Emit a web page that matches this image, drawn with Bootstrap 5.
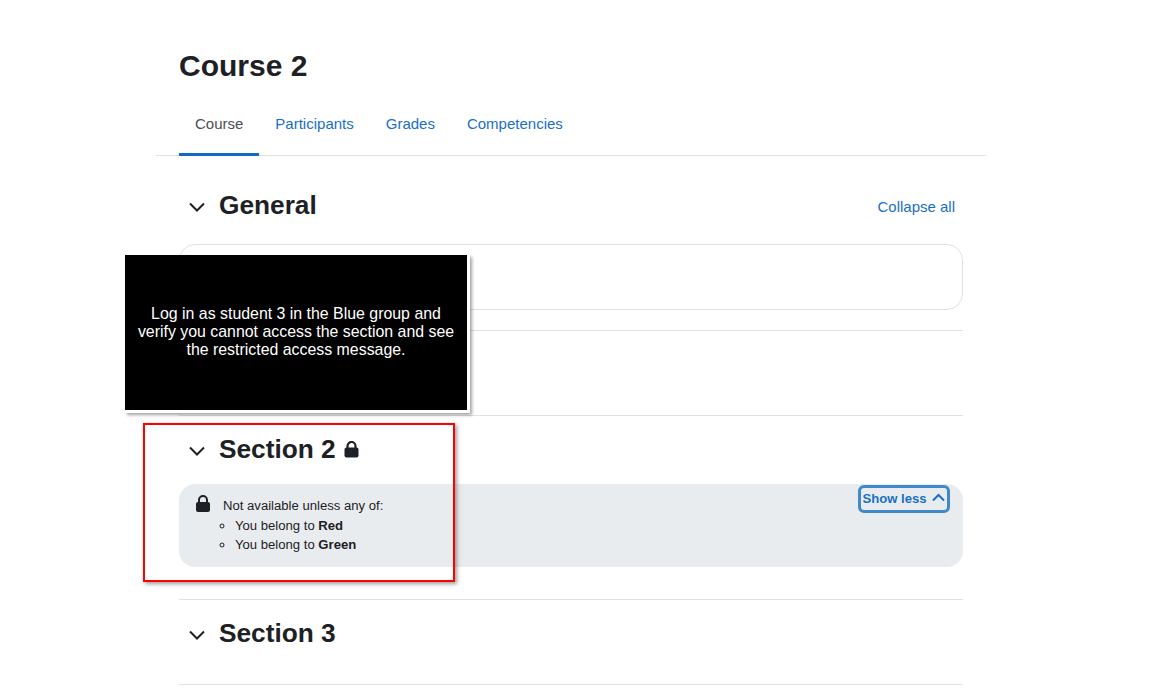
<!DOCTYPE html>
<html lang="en">
<head>
<meta charset="utf-8">
<title>Course 2</title>
<link href="https://cdn.jsdelivr.net/npm/bootstrap@5.3.0/dist/css/bootstrap.min.css" rel="stylesheet">
<style>
html,body{height:699px;overflow:hidden;background:#fff;}
body{font-family:"Liberation Sans",Arial,sans-serif;color:#1d2125;font-size:15px;position:relative;}
.page-wrap{width:830px;margin-left:156px;}
.page-head{padding:0 23px;height:100px;display:flex;align-items:flex-end;}
.page-head h1{font-size:30px;font-weight:700;line-height:36px;margin:0 0 16px;color:#1d2125;}
.tab-row{border-bottom:1px solid #dee2e6;padding:0 23px;height:56px;display:flex;}
.tab-row a{display:block;height:56px;padding:0 16px;line-height:48px;font-size:15px;color:#1a6fc4;text-decoration:none;}
.tab-row a.on{color:#495057;border-bottom:3px solid #0f6cbf;}
.main-col{padding:0 23px;}
.sec-head{display:flex;align-items:center;}
.sec-head h3{font-size:26.25px;font-weight:700;line-height:32px;margin:0;color:#1d2125;}
.chev{width:40px;height:16px;flex:none;margin-top:3px;}
.sec-one{height:175px;padding-top:33px;border-bottom:1px solid #dee2e6;}
.sec-one .sec-head{justify-content:space-between;padding-right:8px;}
.collapse-link{font-size:15px;color:#1a6fc4;text-decoration:none;padding-top:4px;}
.info-box{border:1px solid #dee2e6;border-radius:16px;height:66px;margin-top:23px;}
.sec-plain{height:85px;border-bottom:1px solid #dee2e6;}
.sec-two{height:184px;padding-top:17px;border-bottom:1px solid #dee2e6;}
.sec-three{height:85px;padding-top:17px;border-bottom:1px solid #dee2e6;}
.avail-box{background:#e9ecef;border-radius:16px;height:83px;margin-top:19px;padding:12px 16px;position:relative;font-size:13.125px;line-height:19.5px;}
.avail-line{display:flex;align-items:flex-start;}
.avail-line svg{margin-right:12px;flex:none;margin-top:-1px;}
.avail-box ul{list-style:circle;margin:0;padding-left:40px;}
.show-less{position:absolute;top:1px;right:13px;width:92px;height:28px;border:3px solid #3f88c9;border-radius:6px;background:transparent;color:#1a6fc4;font-weight:700;font-size:13.125px;padding:0 1px 0 0;display:flex;align-items:center;justify-content:center;gap:5px;line-height:1;}
.show-less svg{margin-top:-3px;}
.tip-box{position:absolute;left:125px;top:255px;width:345px;height:158px;background:#000;border:solid #fff;border-width:0 3px 3px 0;box-shadow:2px 2px 3px rgba(90,90,90,.55);color:#fff;font-size:15.9px;line-height:18px;text-align:center;display:flex;align-items:center;justify-content:center;padding:0 8px 2px;}
.red-box{position:absolute;left:143px;top:423px;width:312px;height:159px;border:2px solid #f00;box-shadow:2px 2px 4px rgba(90,90,90,.6);pointer-events:none;}
</style>
</head>
<body>
<div class="page-wrap">
  <div class="page-head"><h1>Course 2</h1></div>
  <div class="tab-row">
    <a class="on" href="#">Course</a>
    <a href="#">Participants</a>
    <a href="#">Grades</a>
    <a href="#">Competencies</a>
  </div>
  <div class="main-col">
    <div class="sec-one">
      <div class="sec-head">
        <div class="d-flex align-items-center">
          <svg class="chev" viewBox="0 0 40 16"><path d="M11 4.5 L18 11.5 L25 4.5" fill="none" stroke="#1d2125" stroke-width="2"/></svg>
          <h3>General</h3>
        </div>
        <a class="collapse-link" href="#">Collapse all</a>
      </div>
      <div class="info-box"></div>
    </div>
    <div class="sec-plain"></div>
    <div class="sec-two">
      <div class="sec-head">
        <svg class="chev" viewBox="0 0 40 16"><path d="M11 4.5 L18 11.5 L25 4.5" fill="none" stroke="#1d2125" stroke-width="2"/></svg>
        <h3>Section 2</h3>
        <svg class="ms-2" width="15" height="17" viewBox="0 0 15 17"><path d="M3.5 8V5a4 4 0 0 1 8 0v3" fill="none" stroke="#1d2125" stroke-width="2.2"/><rect x="0.5" y="6.5" width="14" height="10" rx="2" fill="#1d2125"/></svg>
      </div>
      <div class="avail-box">
        <div class="avail-line">
          <svg width="16" height="18" viewBox="0 0 16 18"><path d="M4 8V5a4 4 0 0 1 8 0v3" fill="none" stroke="#1d2125" stroke-width="2"/><rect x="1" y="7" width="14" height="10" rx="2" fill="#1d2125"/></svg>
          <span>Not available unless any of:</span>
        </div>
        <ul>
          <li>You belong to <strong>Red</strong></li>
          <li>You belong to <strong>Green</strong></li>
        </ul>
        <button class="show-less" type="button">Show less
          <svg width="13" height="9" viewBox="0 0 13 9"><path d="M1 7.5 L6.5 2 L12 7.5" fill="none" stroke="#1a6fc4" stroke-width="2"/></svg>
        </button>
      </div>
    </div>
    <div class="sec-three">
      <div class="sec-head">
        <svg class="chev" viewBox="0 0 40 16"><path d="M11 4.5 L18 11.5 L25 4.5" fill="none" stroke="#1d2125" stroke-width="2"/></svg>
        <h3>Section 3</h3>
      </div>
    </div>
  </div>
</div>
<div class="tip-box"><span>Log in as student 3 in the Blue group and verify you cannot access the section and see the restricted access message.</span></div>
<div class="red-box"></div>
<script src="https://cdn.jsdelivr.net/npm/bootstrap@5.3.0/dist/js/bootstrap.bundle.min.js"></script>
</body>
</html>
